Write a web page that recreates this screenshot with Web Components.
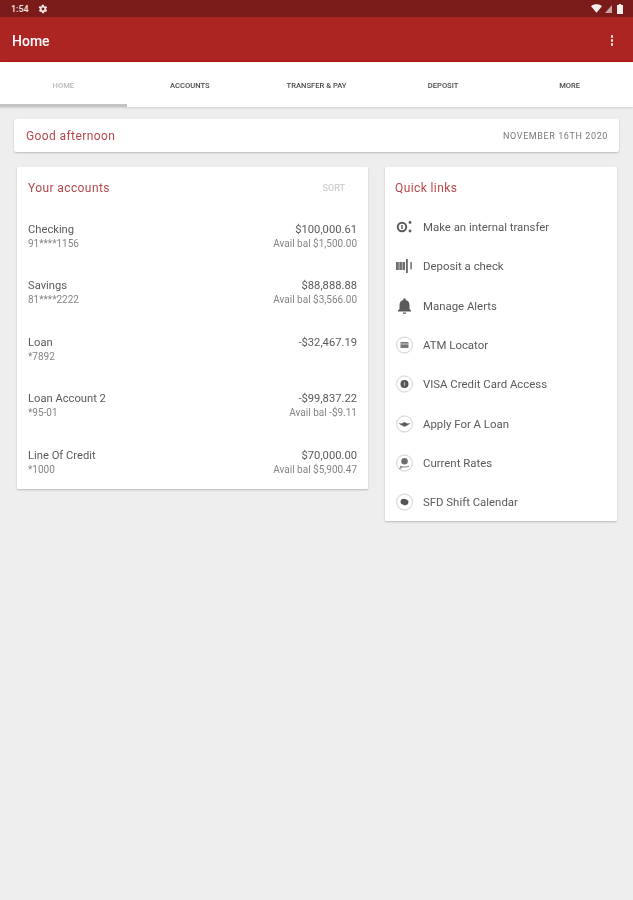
<!DOCTYPE html>
<html>
<head>
<meta charset="utf-8">
<title>Home</title>
<style>
  html, body { margin: 0; padding: 0; height: 100%; }
  body { background: #eeeeee; font-family: Roboto, "Liberation Sans", sans-serif; }
</style>
</head>
<body>
<app-shell>
  <status-bar slot="top"></status-bar>
  <app-bar slot="top" title="Home"></app-bar>
  <tab-strip slot="top"></tab-strip>
  <greeting-card slot="greeting" date="NOVEMBER 16TH 2020">Good afternoon</greeting-card>
  <accounts-card slot="left">
    <account-row name="Checking" num="91****1156" amount="$100,000.61" avail="Avail bal $1,500.00"></account-row>
    <account-row name="Savings" num="81****2222" amount="$88,888.88" avail="Avail bal $3,566.00"></account-row>
    <account-row name="Loan" num="*7892" amount="-$32,467.19"></account-row>
    <account-row name="Loan Account 2" num="*95-01" amount="-$99,837.22" avail="Avail bal -$9.11"></account-row>
    <account-row name="Line Of Credit" num="*1000" amount="$70,000.00" avail="Avail bal $5,900.47"></account-row>
  </accounts-card>
  <links-card slot="right">
    <quick-link icon="transfer">Make an internal transfer</quick-link>
    <quick-link icon="deposit">Deposit a check</quick-link>
    <quick-link icon="bell">Manage Alerts</quick-link>
    <quick-link icon="atm">ATM Locator</quick-link>
    <quick-link icon="visa">VISA Credit Card Access</quick-link>
    <quick-link icon="loan">Apply For A Loan</quick-link>
    <quick-link icon="rates">Current Rates</quick-link>
    <quick-link icon="calendar">SFD Shift Calendar</quick-link>
  </links-card>
</app-shell>

<script>
// page frame: top bars, greeting, then the two columns
// the blur is there because the reference is a soft, upscaled screenshot
class AppShell extends HTMLElement {
  constructor() {
    super();
    this.attachShadow({ mode: 'open' });
    this.shadowRoot.innerHTML = `
    <style>
      :host { display: block; filter: blur(0.6px); }
      .content { padding: 12px 14px 0 14px; }
      .columns {
        display: grid;
        grid-template-columns: 351px 232px;
        column-gap: 17px;
        align-items: start;
        padding: 15px 2px 0 3px;
      }
    </style>
    <slot name="top"></slot>
    <div class="content">
      <slot name="greeting"></slot>
      <div class="columns">
        <slot name="left"></slot>
        <slot name="right"></slot>
      </div>
    </div>
    `;
  }
}
customElements.define('app-shell', AppShell);

class StatusBar extends HTMLElement {
  constructor() {
    super();
    this.attachShadow({ mode: 'open' });
    this.shadowRoot.innerHTML = `
    <style>
      :host {
        display: flex;
        align-items: center;
        height: 17px;
        padding: 0 10px 0 11px;
        background: #7a1b19;
        color: #f3e6e6;
        font-size: 9px;
        font-weight: 500;
      }
      svg { display: block; }
      .gear { margin-left: 9px; }
      .right { margin-left: auto; display: flex; align-items: center; gap: 3px; }
    </style>
    <span>1:54</span>
    <svg class="gear" width="10" height="10" viewBox="0 0 24 24" fill="#f5eaea"><path d="M19.4 13c.1-.3.1-.7.1-1s0-.7-.1-1l2.1-1.6c.2-.2.2-.4.1-.6l-2-3.5c-.1-.2-.4-.3-.6-.2l-2.5 1c-.5-.4-1.100-.7-1.700-1L14 2.400c0-.2-.2-.4-.5-.4h-4c-.3 0-.5.2-.5.4l-.4 2.700c-.6.2-1.200.6-1.700 1l-2.500-1c-.2-.1-.5 0-.6.2l-2 3.500c-.1.2-.1.4.1.6L4.600 11c-.1.300-.1.700-.1 1s0 .7.1 1l-2.100 1.600c-.2.2-.2.4-.1.600l2 3.500c.1.2.4.3.6.2l2.500-1c.5.4 1.100.7 1.700 1l.4 2.700c0 .2.2.4.5.4h4c.3 0 .5-.2.5-.4l.4-2.700c.6-.2 1.200-.6 1.700-1l2.500 1c.2.1.5 0 .6-.2l2-3.500c.1-.2.1-.4-.1-.6zM12 15.500a3.500 3.500 0 1 1 0-7 3.500 3.500 0 0 1 0 7z"/></svg>
    <span class="right">
      <svg width="11" height="9" viewBox="0 0 13 10"><path d="M0 2.200C1.800.8 4 0 6.500 0S11.200.8 13 2.200L6.500 10z" fill="#f7eeee"/></svg>
      <svg width="7" height="8" viewBox="0 0 7 8"><path d="M7 0v8H0z" fill="#c9a3a2"/></svg>
      <svg width="6" height="10" viewBox="0 0 6 10" style="margin-left:2px"><path d="M1.800 0h2.400v1H6v9H0V1h1.800z" fill="#f7eeee"/></svg>
    </span>
    `;
  }
}
customElements.define('status-bar', StatusBar);

class AppBar extends HTMLElement {
  constructor() {
    super();
    this.attachShadow({ mode: 'open' });
    this.shadowRoot.innerHTML = `
    <style>
      :host {
        display: flex;
        align-items: center;
        box-sizing: border-box;
        height: 45px;
        padding: 3px 20px 0 12px;
        background: #ac2522;
        border-bottom: 1px solid #b5110d;
        color: #fff;
        font-size: 14px;
        font-weight: 500;
      }
      .dots { margin-left: auto; display: flex; flex-direction: column; gap: 1.500px; }
      .dots i { width: 2.500px; height: 2.500px; border-radius: 50%; background: #f8ecec; }
    </style>
    <span id="t"></span>
    <div class="dots"><i></i><i></i><i></i></div>
    `;
    this.shadowRoot.getElementById('t').textContent = this.getAttribute('title');
  }
}
customElements.define('app-bar', AppBar);

class TabStrip extends HTMLElement {
  constructor() {
    super();
    this.attachShadow({ mode: 'open' });
    const tabs = ['HOME', 'ACCOUNTS', 'TRANSFER & PAY', 'DEPOSIT', 'MORE'];
    this.shadowRoot.innerHTML = `
    <style>
      :host {
        display: grid;
        grid-template-columns: repeat(5, 1fr);
        height: 45px;
        background: #fff;
        box-shadow: 0 1px 2px rgba(0,0,0,0.12);
        position: relative;
      }
      div {
        display: flex;
        align-items: center;
        justify-content: center;
        box-sizing: border-box;
        padding-top: 4px;
        border-bottom: 3px solid transparent;
        font-size: 7.600px;
        font-weight: 500;
        color: #4a4a4a;
      }
      div.on { color: #b9b9b9; border-bottom-color: #c4c4c4; }
    </style>
    ${tabs.map((t, i) => `<div class="${i == 0 ? 'on' : ''}">${t.replace('&', '&amp;')}</div>`).join('')}
    `;
  }
}
customElements.define('tab-strip', TabStrip);

class GreetingCard extends HTMLElement {
  constructor() {
    super();
    this.attachShadow({ mode: 'open' });
    this.shadowRoot.innerHTML = `
    <style>
      :host {
        display: flex;
        align-items: center;
        justify-content: space-between;
        height: 33px;
        padding: 0 11px 0 12px;
        background: #fff;
        border-radius: 2px;
        box-shadow: 0 1px 2px rgba(0,0,0,0.22);
      }
      .hi { font-size: 12px; color: #b8474a; letter-spacing: 0.4px; }
      .date { font-size: 9px; color: #777; letter-spacing: 0.6px; }
    </style>
    <span class="hi"><slot></slot></span>
    <span class="date" id="d"></span>
    `;
    this.shadowRoot.getElementById('d').textContent = this.getAttribute('date');
  }
}
customElements.define('greeting-card', GreetingCard);

class AccountsCard extends HTMLElement {
  constructor() {
    super();
    this.attachShadow({ mode: 'open' });
    this.shadowRoot.innerHTML = `
    <style>
      :host {
        display: block;
        height: 322px;
        padding: 0 11px;
        background: #fff;
        border-radius: 1px;
        box-shadow: 0 1px 2px rgba(0,0,0,0.22);
      }
      .head {
        display: flex;
        align-items: center;
        justify-content: space-between;
        height: 42px;
        margin-bottom: 13px;
      }
      .title { font-size: 12px; color: #b8474a; letter-spacing: 0.4px; }
      .sort { font-size: 9px; font-weight: 500; color: #cfcfcf; margin-right: 12px; }
      .rows { display: grid; row-gap: 27.500px; }
    </style>
    <div class="head"><span class="title">Your accounts</span><span class="sort">SORT</span></div>
    <div class="rows"><slot></slot></div>
    `;
  }
}
customElements.define('accounts-card', AccountsCard);

class AccountRow extends HTMLElement {
  constructor() {
    super();
    this.attachShadow({ mode: 'open' });
    this.shadowRoot.innerHTML = `
    <style>
      :host {
        display: grid;
        grid-template-columns: 1fr auto;
        grid-auto-rows: 14px;
        align-items: center;
        height: 29px;
        font-size: 11.200px;
        color: #5a5a5a;
      }
      .sub { font-size: 10px; color: #858585; }
      .r { text-align: right; }
    </style>
    <span>${this.getAttribute('name')}</span>
    <span class="r">${this.getAttribute('amount')}</span>
    <span class="sub">${this.getAttribute('num')}</span>
    <span class="sub r">${this.getAttribute('avail') || ''}</span>
    `;
  }
}
customElements.define('account-row', AccountRow);

class LinksCard extends HTMLElement {
  constructor() {
    super();
    this.attachShadow({ mode: 'open' });
    this.shadowRoot.innerHTML = `
    <style>
      :host {
        display: block;
        height: 354px;
        padding: 0 10px;
        background: #fff;
        border-radius: 1px;
        box-shadow: 0 1px 2px rgba(0,0,0,0.22);
      }
      .title { display: flex; align-items: center; height: 42px; font-size: 12px; color: #b8474a; letter-spacing: 0.4px; }
      .list { display: grid; grid-auto-rows: 39.300px; margin-top: -1.500px; }
    </style>
    <div class="title">Quick links</div>
    <div class="list"><slot></slot></div>
    `;
  }
}
customElements.define('links-card', LinksCard);

// 20x20 icons, roughly what the reference shows at this size
const RING = `<circle cx="9.500" cy="10" r="8" fill="none" stroke="#dedede" stroke-width="1.300"/>`;
const ICONS = {
  transfer: `<circle cx="7" cy="10" r="4.200" fill="none" stroke="#5c5c5c" stroke-width="2"/><rect x="6.300" y="8" width="1.400" height="4" fill="#5c5c5c"/><circle cx="15" cy="5.500" r="1.400" fill="#5c5c5c"/><circle cx="15" cy="14" r="1.400" fill="#5c5c5c"/>`,
  deposit: `<rect x="1" y="6" width="9" height="8" fill="#6e6e6e"/><rect x="3.600" y="6" width="1" height="8" fill="#bbb"/><rect x="6.800" y="6" width="1" height="8" fill="#bbb"/><rect x="11" y="3" width="1.800" height="14" fill="#666"/><rect x="15.300" y="6" width="1.600" height="7.500" fill="#777"/>`,
  bell: `<path d="M9.500 18a1.600 1.600 0 0 0 1.600-1.600H7.900A1.600 1.600 0 0 0 9.500 18zM14.500 13V9.200c0-2.600-1.400-4.500-3.800-5.100v-.6a1.200 1.200 0 0 0-2.400 0v.6C5.900 4.700 4.500 6.600 4.500 9.200V13L3 14.500v1h13v-1z" fill="#5a5a5a"/>`,
  atm: `${RING}<rect x="5.500" y="7" width="8" height="6" rx=".5" fill="#777"/><rect x="5.500" y="8.500" width="8" height="1" fill="#ccc"/>`,
  visa: `${RING}<circle cx="9.500" cy="10" r="4" fill="#555"/><rect x="8.900" y="8" width="1.200" height="4" fill="#bbb"/>`,
  loan: `${RING}<path d="M3.500 9.300l3.200.2L9.500 8l2.800 1.500 3.200-.2-2.500 1.700-3.500 1.800L6 11z" fill="#5a5a5a"/>`,
  rates: `${RING}<circle cx="9.500" cy="8.300" r="3.300" fill="#6e6e6e"/><path d="M5 13.300c1.700 1 6.500 1 9 0M7 13.500l-2.500 2.500" fill="none" stroke="#888" stroke-width="1.100"/>`,
  calendar: `${RING}<ellipse cx="9.500" cy="10" rx="4" ry="3" transform="rotate(15 9.500 10)" fill="#555"/>`
};

class QuickLink extends HTMLElement {
  constructor() {
    super();
    this.attachShadow({ mode: 'open' });
    this.shadowRoot.innerHTML = `
    <style>
      :host {
        display: flex;
        align-items: center;
        column-gap: 8px;
        font-size: 11.400px;
        color: #5a5a5a;
      }
      svg { display: block; flex: none; }
    </style>
    <svg width="20" height="20" viewBox="0 0 20 20">${ICONS[this.getAttribute('icon')]}</svg>
    <span><slot></slot></span>
    `;
  }
}
customElements.define('quick-link', QuickLink);
</script>
</body>
</html>
